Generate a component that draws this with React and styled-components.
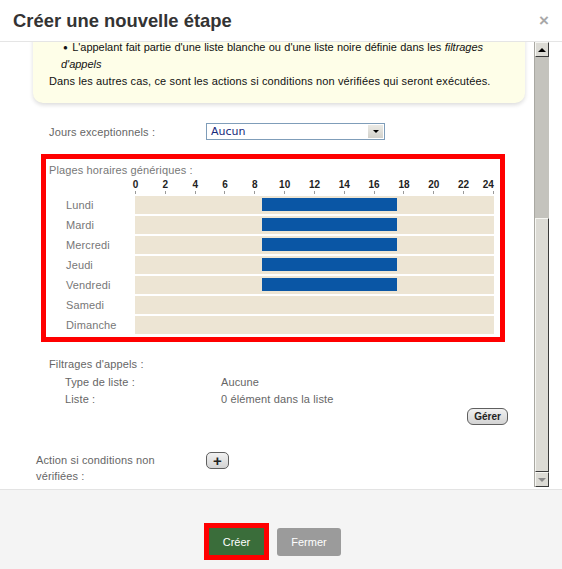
import React from 'react';
import styled, { createGlobalStyle } from 'styled-components';

const GlobalStyle = createGlobalStyle`
  html, body {
    margin: 0;
    padding: 0;
    background: #fff;
  }
  body {
    font-family: "Liberation Sans", Arial, sans-serif;
    overflow: hidden;
  }
`;

const Dialog = styled.div`
    width: 562px;
    height: 569px;
    display: flex;
    flex-direction: column;
    background: #fff;
`;

const Header = styled.div`
    height: 41px;
    flex: none;
    display: flex;
    align-items: center;
    justify-content: space-between;
    padding: 0 13px 0 13px;
    border-bottom: 1px solid #e5e5e5;
`;

const Title = styled.h3`
    margin: 0;
    font-size: 18.4px;
    font-weight: bold;
    color: #333;
`;

const Close = styled.span`
    font-size: 17px;
    font-weight: bold;
    color: #a8a8a8;
    line-height: 1;
    cursor: pointer;
`;

const Body = styled.div`
    flex: 1;
    display: flex;
    min-height: 0;
`;

const Viewport = styled.div`
    flex: 1;
    overflow: hidden;
    font-size: 11px;
    letter-spacing: 0.13px;
`;

const ScrollBar = styled.div`
    width: 15px;
    flex: none;
    margin: 0 13px 2px 0;
    display: flex;
    flex-direction: column;
    background: #c4c3bd;
    border-left: 1px solid #a9a8a2;
    box-sizing: border-box;
`;

const ScrollButton = styled.div`
    height: 15px;
    flex: none;
    box-sizing: border-box;
    background: #dcdbd5;
    border: 1px solid;
    border-color: #f6f6f2 #3a3a3a #3a3a3a #f6f6f2;
    display: flex;
    align-items: center;
    justify-content: center;
    &::after {
        content: '';
        border-left: 4px solid transparent;
        border-right: 4px solid transparent;
        ${({ $down }) => $down
            ? 'border-top: 4px solid #8a8a8a;'
            : 'border-bottom: 4px solid #000;'}
    }
`;

const Track = styled.div`
    flex: 1;
    display: flex;
    flex-direction: column;
    justify-content: flex-end;
`;

const Thumb = styled.div`
    height: ${({ $size }) => $size}px;
    box-sizing: border-box;
    background: #dcdbd5;
    border: 1px solid;
    border-color: #f6f6f2 #3a3a3a #3a3a3a #f6f6f2;
`;

const NoteBox = styled.div`
    margin: -12px 9px 0 33px;
    padding: 9px 16px 13px 16px;
    background: #fefee8;
    border-radius: 0 0 10px 10px;
    box-shadow: 0 2px 4px rgba(0, 0, 0, 0.14);
    line-height: 17px;
    color: #111;
`;

const NoteList = styled.ul`
    margin: 0 26px 0 12px;
    padding: 0;
    list-style: none;
    letter-spacing: -0.03px;
`;

const NoteItem = styled.li`
    text-align: justify;
    text-indent: 2px;
    &::before {
        content: '●';
        font-size: 8px;
        margin-right: 4px;
        vertical-align: 1px;
    }
`;

const NoteText = styled.p`
    margin: 0;
`;

const FieldRow = styled.div`
    display: grid;
    grid-template-columns: ${({ $label }) => $label}px auto;
    align-items: center;
    justify-items: start;
    padding-left: ${({ $indent }) => $indent}px;
    margin-top: ${({ $top }) => $top || 0}px;
    color: #666;
`;

const SelectBox = styled.div`
    width: 179px;
    height: 17px;
    box-sizing: border-box;
    border: 1px solid #7f9db9;
    display: flex;
    align-items: stretch;
    background: #fff;
`;

const SelectValue = styled.span`
    flex: 1;
    padding-left: 4px;
    font-family: "DejaVu Sans", Verdana, sans-serif;
    font-size: 11px;
    letter-spacing: 0;
    line-height: 15px;
    color: #15287a;
`;

const SelectArrow = styled.span`
    width: 15px;
    margin: 1px;
    background: linear-gradient(#ebeae5, #d2d1cb);
    display: flex;
    align-items: center;
    justify-content: center;
    &::after {
        content: '';
        border-left: 3px solid transparent;
        border-right: 3px solid transparent;
        border-top: 3px solid #000;
    }
`;

const PlagesBox = styled.div`
    margin: 14px 0 0 41px;
    width: 464px;
    box-sizing: border-box;
    border: 5px solid #ff0000;
    padding: 4px 0 3px 0;
    color: #777;
`;

const PlagesTitle = styled.div`
    padding-left: 3px;
    line-height: 14px;
`;

const Axis = styled.div`
    margin: 2px 0 0 89px;
    width: 359px;
    display: flex;
    justify-content: space-between;
    letter-spacing: 0;
`;

const HourMark = styled.div`
    width: 1px;
    display: flex;
    flex-direction: column;
    align-items: ${({ $last }) => ($last ? 'flex-end' : 'center')};
`;

const HourLabel = styled.span`
    font-size: 10px;
    font-weight: bold;
    line-height: 12px;
    color: #222;
    white-space: nowrap;
`;

const Tick = styled.span`
    width: 1px;
    height: 3px;
    background: #9a9a9a;
`;

const DayRow = styled.div`
    display: grid;
    grid-template-columns: 69px 359px;
    align-items: center;
    padding-left: 20px;
    margin-top: 2px;
`;

const DayName = styled.span`
    line-height: 18px;
`;

const BarTrack = styled.div`
    height: 18px;
    background: #ede5d4;
    display: flex;
    align-items: flex-start;
`;

const Bar = styled.div`
    flex: none;
    height: 13px;
    margin-top: 2px;
    background: #0a56a5;
`;

const Section = styled.div`
    margin-top: 14px;
    line-height: 17px;
    color: #666;
`;

const SectionTitle = styled.div`
    padding-left: 49px;
    margin-bottom: 1px;
`;

const Actions = styled.div`
    display: flex;
    justify-content: flex-end;
    padding-right: 26px;
`;

const SmallButton = styled.button`
    height: 17px;
    width: ${({ $wide }) => ($wide ? 41 : 23)}px;
    padding: 0;
    box-sizing: border-box;
    border: 1px solid #5f5f5f;
    border-radius: ${({ $wide }) => ($wide ? 6 : 5)}px;
    background: linear-gradient(#f1f1f1, #d3d3d3);
    font-family: "Liberation Sans", Arial, sans-serif;
    font-size: ${({ $wide }) => ($wide ? 10 : 15)}px;
    font-weight: bold;
    line-height: 15px;
    letter-spacing: 0;
    color: #222;
    cursor: pointer;
`;

const ActionLabel = styled.span`
    width: 130px;
    line-height: 16px;
`;

const ActionRow = styled.div`
    display: grid;
    grid-template-columns: 170px max-content;
    align-items: start;
    justify-items: start;
    padding-left: 36px;
    margin-top: 27px;
    color: #666;
`;

const Footer = styled.div`
    height: 80px;
    flex: none;
    border-top: 1px solid #e3e3e3;
    background: #f4f4f4;
    display: flex;
    justify-content: center;
    align-items: flex-start;
    gap: 13px;
    padding: 38px 12px 0 0;
    box-sizing: border-box;
`;

const FooterButton = styled.button`
    height: ${({ $primary }) => ($primary ? 27 : 28)}px;
    width: ${({ $primary }) => ($primary ? 55 : 64)}px;
    border: none;
    border-radius: ${({ $primary }) => ($primary ? 0 : 3)}px;
    outline: ${({ $primary }) => ($primary ? '5px solid #ff0000' : 'none')};
    background: ${({ $primary }) => ($primary ? '#3a6d3a' : '#9b9b9b')};
    color: #fff;
    font-family: "Liberation Sans", Arial, sans-serif;
    font-size: 11px;
    cursor: pointer;
`;

const HOURS = [0, 2, 4, 6, 8, 10, 12, 14, 16, 18, 20, 22, 24];

const DAYS = [
  { name: 'Lundi', ranges: [[8.5, 17.5]] },
  { name: 'Mardi', ranges: [[8.5, 17.5]] },
  { name: 'Mercredi', ranges: [[8.5, 17.5]] },
  { name: 'Jeudi', ranges: [[8.5, 17.5]] },
  { name: 'Vendredi', ranges: [[8.5, 17.5]] },
  { name: 'Samedi', ranges: [] },
  { name: 'Dimanche', ranges: [] },
];

const App = () => {
  return (
    <Dialog>
      <GlobalStyle />
      <Header>
        <Title>Créer une nouvelle étape</Title>
        <Close>×</Close>
      </Header>

      <Body>
        <Viewport>
          <NoteBox>
            <NoteList>
              <NoteItem>
                L'appelant fait partie d'une liste blanche ou d'une liste noire définie dans les{' '}
                <em>filtrages d'appels</em>
              </NoteItem>
            </NoteList>
            <NoteText>
              Dans les autres cas, ce sont les actions si conditions non vérifiées qui seront exécutées.
            </NoteText>
          </NoteBox>

          <FieldRow $label={157} $indent={49} $top={20}>
            <span>Jours exceptionnels :</span>
            <SelectBox>
              <SelectValue>Aucun</SelectValue>
              <SelectArrow />
            </SelectBox>
          </FieldRow>

          <PlagesBox>
            <PlagesTitle>Plages horaires génériques :</PlagesTitle>
            <Axis>
              {HOURS.map((h, i) => (
                <HourMark key={h} $last={i === HOURS.length - 1}>
                  <HourLabel>{h}</HourLabel>
                  <Tick />
                </HourMark>
              ))}
            </Axis>
            {DAYS.map((day) => (
              <DayRow key={day.name}>
                <DayName>{day.name}</DayName>
                <BarTrack>
                  {day.ranges.map(([start, end], i) => (
                    <Bar
                      key={i}
                      style={{
                        marginLeft: `${(start / 24) * 100}%`,
                        width: `${((end - start) / 24) * 100}%`,
                      }}
                    />
                  ))}
                </BarTrack>
              </DayRow>
            ))}
          </PlagesBox>

          <Section>
            <SectionTitle>Filtrages d'appels :</SectionTitle>
            <FieldRow $label={156} $indent={65}>
              <span>Type de liste :</span>
              <span>Aucune</span>
            </FieldRow>
            <FieldRow $label={156} $indent={65}>
              <span>Liste :</span>
              <span>0 élément dans la liste</span>
            </FieldRow>
            <Actions>
              <SmallButton $wide>Gérer</SmallButton>
            </Actions>
          </Section>

          <ActionRow>
            <ActionLabel>Action si conditions non vérifiées :</ActionLabel>
            <SmallButton>+</SmallButton>
          </ActionRow>
        </Viewport>

        <ScrollBar>
          <ScrollButton />
          <Track>
            <Thumb $size={254} />
          </Track>
          <ScrollButton $down />
        </ScrollBar>
      </Body>

      <Footer>
        <FooterButton $primary>Créer</FooterButton>
        <FooterButton>Fermer</FooterButton>
      </Footer>
    </Dialog>
  );
};

export default App;
